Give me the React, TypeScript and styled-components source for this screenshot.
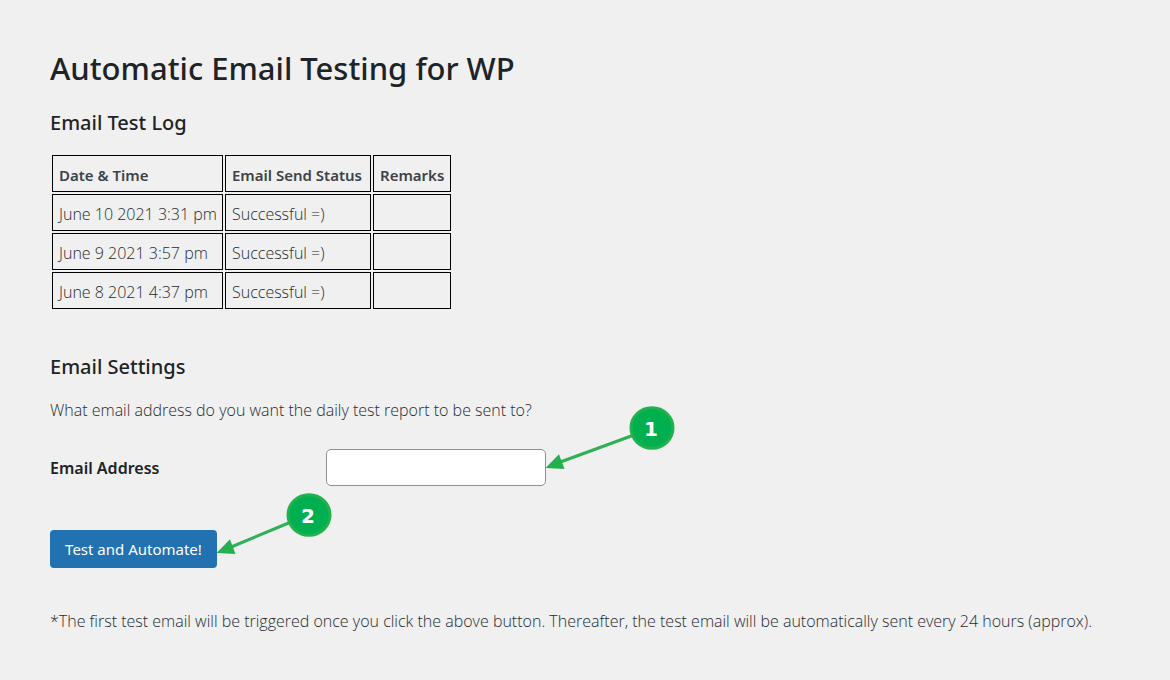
import React from "react";
import styled, { createGlobalStyle } from "styled-components";

const GlobalStyle = createGlobalStyle`
  * { box-sizing: border-box; }
  body {
    margin: 0;
    background: #f0f0f0;
    color: #262b31;
    font-family: "Open Sans", "Noto Sans", sans-serif;
    font-size: 16px;
    font-weight: 300;
    line-height: 24px;
  }
`;

const headingFont = `"Noto Sans", "Open Sans", sans-serif`;

const Page = styled.main`
  padding: 48px 50px 0;
`;

const Title = styled.h1`
  margin: 0;
  color: #1d2327;
  font-family: ${headingFont};
  font-size: 31px;
  font-weight: 500;
  line-height: 40px;
`;

const SectionTitle = styled.h2`
  margin: 0;
  color: #1d2327;
  font-family: ${headingFont};
  font-size: 20px;
  font-weight: 500;
  line-height: 28px;
`;

const LogSection = styled.section`
  margin-top: 21px;
`;

const LogTable = styled.table`
  margin-top: 16px;
  border-collapse: separate;
  border-spacing: 2px;
`;

const cell = `
  height: 37px;
  padding: 2px 5px 0 6px;
  border: 1px solid #000;
  text-align: left;
  white-space: nowrap;
`;

const HeadCell = styled.th<{ $width: number }>`
  ${cell}
  min-width: ${(p) => p.$width}px;
  color: #3c434a;
  font-family: ${headingFont};
  font-size: 15px;
  font-weight: 600;
`;

const Cell = styled.td`
  ${cell}
`;

const SettingsSection = styled.section`
  margin-top: 42px;
`;

const Text = styled.p<{ $top: number }>`
  margin: ${(p) => p.$top}px 0 0;
`;

const Field = styled.div`
  display: grid;
  grid-template-columns: 276px auto;
  justify-content: start;
  align-items: center;
  margin-top: 27px;
`;

const FieldLabel = styled.label`
  color: #1d2327;
  font-family: ${headingFont};
  font-weight: 600;
`;

const Anchor = styled.div`
  position: relative;
  width: fit-content;
`;

const Input = styled.input`
  display: block;
  width: 220px;
  height: 37px;
  padding: 0 8px;
  border: 1px solid #8c8f94;
  border-radius: 5px;
  background: #fff;
  color: #2c3338;
  font: inherit;
`;

const Actions = styled.div`
  margin-top: 44px;
`;

const Button = styled.button`
  display: block;
  min-width: 167px;
  height: 38px;
  padding: 0 14px;
  border: 0;
  border-radius: 4px;
  background: #2271b1;
  color: #fff;
  font: inherit;
  font-family: ${headingFont};
  font-size: 15px;
  font-weight: 400;
  cursor: pointer;
`;

const CalloutArt = styled.svg`
  position: absolute;
  left: 100%;
  bottom: 0;
  overflow: visible;
  pointer-events: none;
`;

const CalloutNumber = styled.text`
  fill: #fff;
  font-family: "DejaVu Sans", sans-serif;
  font-size: 20px;
  font-weight: 700;
  text-anchor: middle;
`;

type CalloutProps = { label: string; cx: number; cy: number; tipY: number };

function Callout({ label, cx, cy, tipY }: CalloutProps) {
  return (
    <CalloutArt width={cx + 23} height={75} viewBox={`0 0 ${cx + 23} 75`} role="img" aria-label={`Step ${label}`}>
      <line x1={cx - 18} y1={cy + 7} x2="13" y2={tipY - 5.5} stroke="#2fb055" strokeWidth="3" />
      <path d={`M-0.5 ${tipY}L13 ${tipY - 13.7}L18.5 ${tipY + 1}Z`} fill="#22b14c" />
      <ellipse cx={cx} cy={cy} rx="21" ry="20.3" fill="#00b050" stroke="#22b14c" strokeWidth="3" />
      <CalloutNumber x={cx - 1} y={cy + 8}>{label}</CalloutNumber>
    </CalloutArt>
  );
}

const columns = [
  { name: "Date & Time", width: 171 },
  { name: "Email Send Status", width: 146 },
  { name: "Remarks", width: 78 },
];

const log = [
  ["June 10 2021 3:31 pm", "Successful =)", ""],
  ["June 9 2021 3:57 pm", "Successful =)", ""],
  ["June 8 2021 4:37 pm", "Successful =)", ""],
];

export default function App() {
  return (
    <>
      <GlobalStyle />
      <Page>
        <Title>Automatic Email Testing for WP</Title>
        <LogSection>
          <SectionTitle>Email Test Log</SectionTitle>
          <LogTable>
            <thead>
              <tr>
                {columns.map((c) => (
                  <HeadCell key={c.name} scope="col" $width={c.width}>{c.name}</HeadCell>
                ))}
              </tr>
            </thead>
            <tbody>
              {log.map((row) => (
                <tr key={row[0]}>
                  {row.map((value, i) => (
                    <Cell key={i}>{value}</Cell>
                  ))}
                </tr>
              ))}
            </tbody>
          </LogTable>
        </LogSection>
        <SettingsSection>
          <SectionTitle>Email Settings</SectionTitle>
          <Text $top={17}>What email address do you want the daily test report to be sent to?</Text>
          <form onSubmit={(e) => e.preventDefault()}>
            <Field>
              <FieldLabel htmlFor="email">Email Address</FieldLabel>
              <Anchor>
                <Input id="email" type="email" />
                <Callout label="1" cx={106} cy={17} tipY={57} />
              </Anchor>
            </Field>
            <Actions>
              <Anchor>
                <Button type="submit">Test and Automate!</Button>
                <Callout label="2" cx={92} cy={22} tipY={60} />
              </Anchor>
            </Actions>
          </form>
          <Text $top={41}>
            *The first test email will be triggered once you click the above button. Thereafter, the test email will be
            automatically sent every 24 hours (approx).
          </Text>
        </SettingsSection>
      </Page>
    </>
  );
}
